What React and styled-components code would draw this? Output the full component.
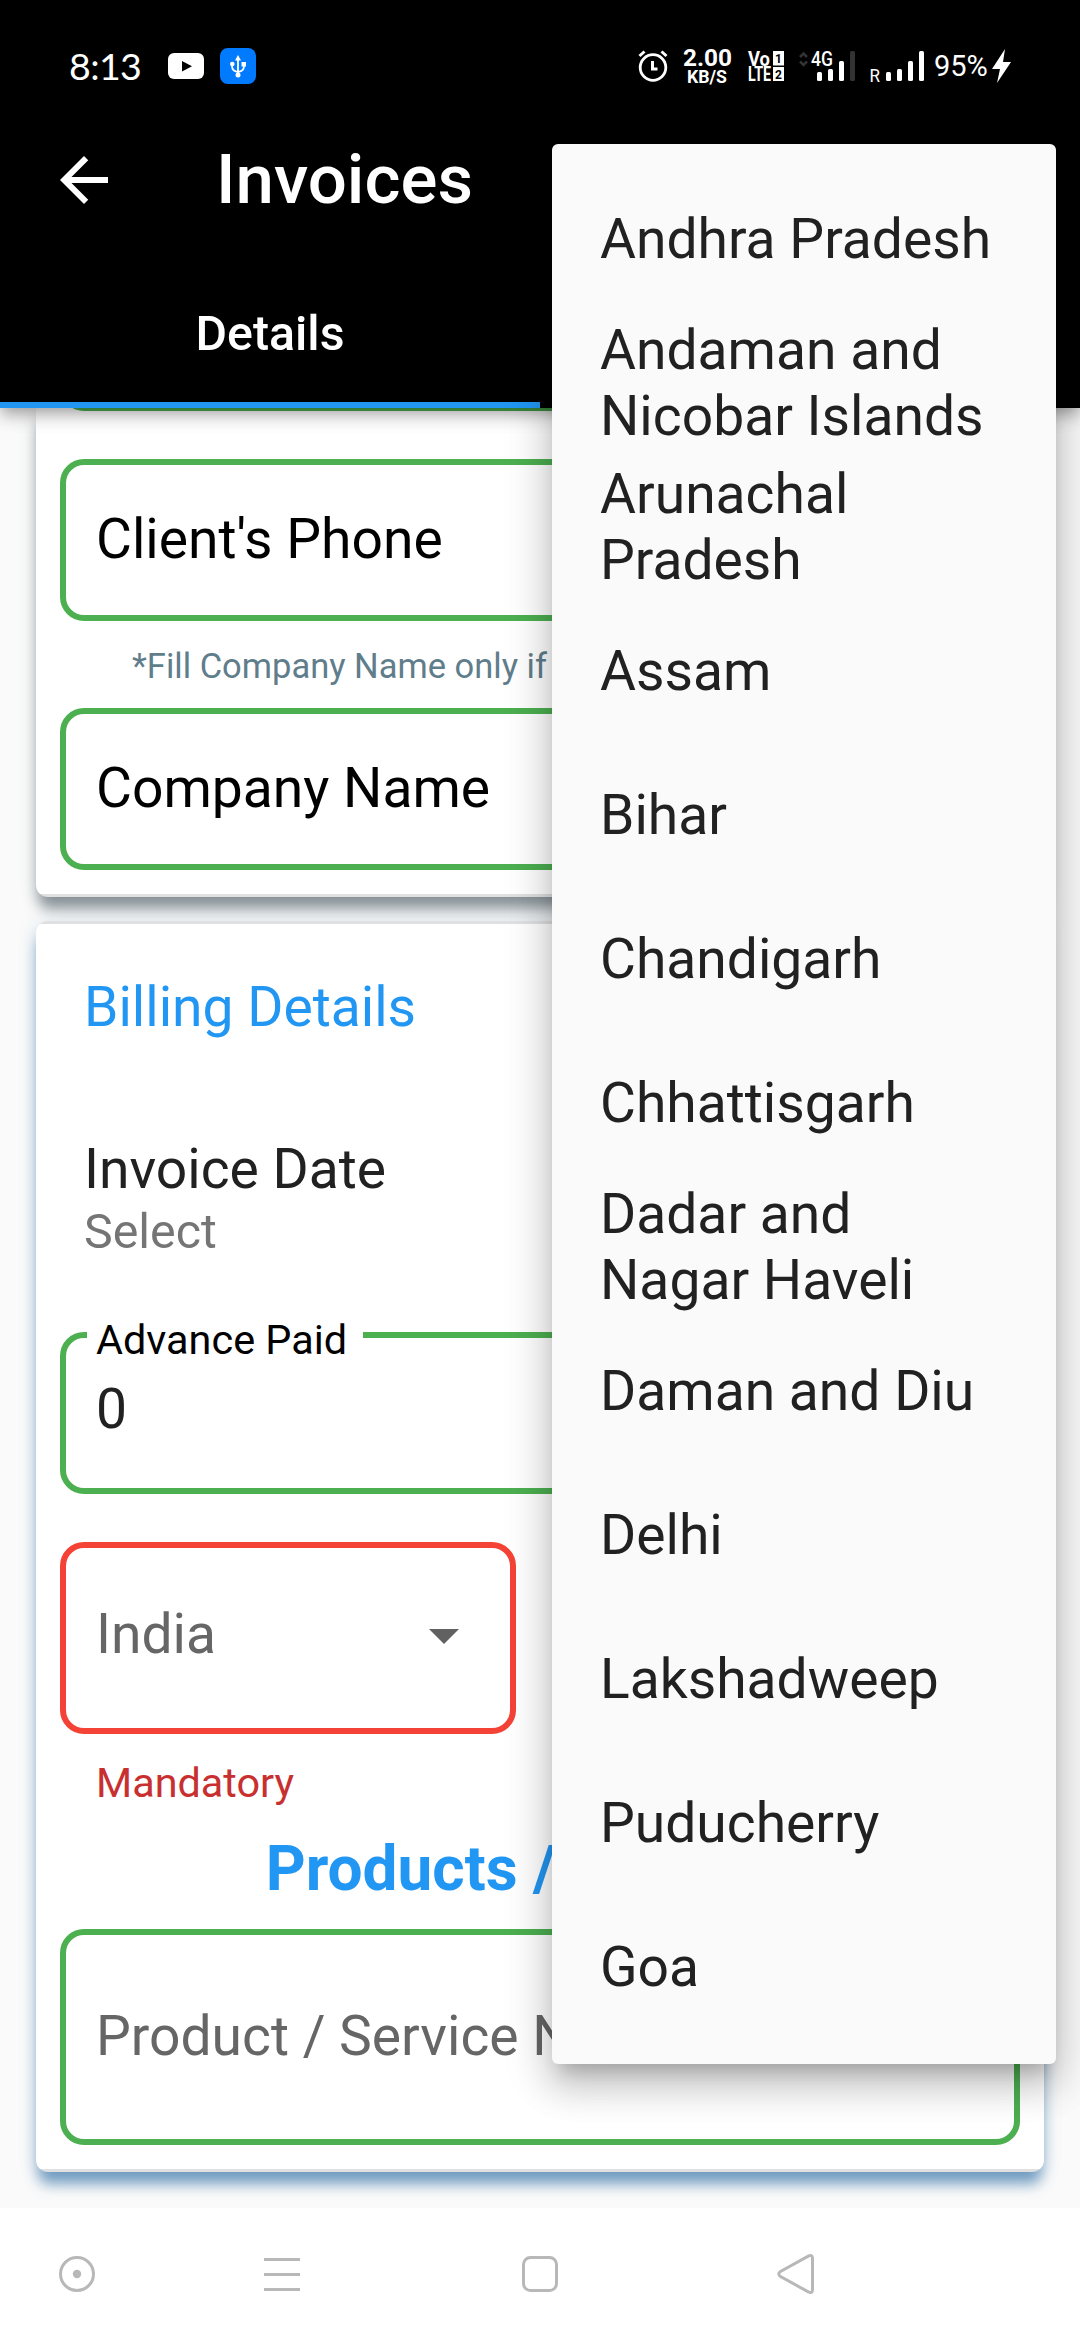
import React from 'react';
import styled, { createGlobalStyle } from 'styled-components';

const Global = createGlobalStyle`
  * { box-sizing: border-box; }
  body { margin: 0; background: #fafafa; font-family: Roboto, "Noto Sans", sans-serif; }
`;

const Screen = styled.div`
  position: relative;
  width: 1080px;
  height: 2340px;
  overflow: hidden;
  display: flex;
  flex-direction: column;
  background: #fafafa;
  color: #212121;
  font-size: 55.2px;
  line-height: 66px;
`;

const Header = styled.header`
  flex: none;
  height: 408px;
  background: #000;
  color: #fff;
  z-index: 1;
  box-shadow: 0 6px 12px -3px rgba(0, 0, 0, 0.2), 0 10px 15px rgba(0, 0, 0, 0.14), 0 3px 24px rgba(0, 0, 0, 0.1);
`;

const StatusBar = styled.div`
  height: 96px;
  padding: 36px 68px 0 69px;
  display: flex;
  justify-content: space-between;
  align-items: flex-start;
`;

const StatusGroup = styled.div`
  display: flex;
  align-items: center;
  height: 60px;
`;

const Clock = styled.span`
  width: 93px;
  font: 400 37.5px/60px Lato, sans-serif;
  letter-spacing: -0.6px;
  white-space: nowrap;
`;

const StatusIcon = styled.svg`
  display: block;
  flex: none;
  overflow: visible;
`;

const DropdownArrow = styled(StatusIcon)`
  margin-top: -2px;
`;

const Battery = styled.span`
  width: 58px;
  font: 400 29px/62px Roboto, sans-serif;
  white-space: nowrap;
`;

const Toolbar = styled.div`
  height: 168px;
  padding-left: 48px;
  display: flex;
  align-items: center;
  gap: 96px;
`;

const Title = styled.h1`
  margin: 0 0 1px;
  font-size: 69px;
  line-height: 81px;
  font-weight: 500;
`;

const Tabs = styled.div`
  height: 144px;
  display: flex;
`;

const Tab = styled.div`
  width: 540px;
  padding-top: 2px;
  border-bottom: 6px solid #2196f3;
  display: flex;
  align-items: center;
  justify-content: center;
  font-size: 48.3px;
  line-height: 58px;
  font-weight: 500;
`;

const Content = styled.main`
  height: 1800px;
  flex: none;
  overflow: hidden;
  display: flex;
  flex-direction: column;
  gap: 24px;
  padding: 0 36px;
`;

const Card = styled.section`
  flex: none;
  height: ${(p) => p.$height}px;
  padding: 0 24px;
  display: flex;
  flex-direction: column;
  background: #fff;
  border-radius: ${(p) => (p.$open ? '0 0 12px 12px' : '12px')};
  background-image: linear-gradient(#e0e0e0, #e0e0e0), linear-gradient(#e0e0e0, #e0e0e0);
  background-size: 100% 3px, 100% ${(p) => (p.$open ? 0 : 3)}px;
  background-position: bottom, top;
  background-repeat: no-repeat;
  box-shadow: 0 15px 14px -3px ${(p) => p.$shade}, 0 4px 18px ${(p) => p.$glow};
`;

const FieldEnd = styled.div`
  flex: none;
  height: 48px;
  margin-top: -45px;
  border: 6px solid #4caf50;
  border-top: 0;
  border-radius: 0 0 24px 24px;
`;

const Field = styled.div`
  position: relative;
  flex: none;
  width: ${(p) => p.$width || 960}px;
  height: ${(p) => p.$height || 162}px;
  margin-top: ${(p) => p.$top}px;
  padding: ${(p) => p.$pad}px 30px 0;
  border: 6px solid ${(p) => (p.$error ? '#f44336' : '#4caf50')};
  border-radius: 24px;
  display: flex;
  align-items: flex-start;
  justify-content: space-between;
  color: ${(p) => p.$color || '#000'};
  white-space: nowrap;
`;

const FloatingLabel = styled.span`
  position: absolute;
  left: 21px;
  top: -23px;
  width: 276px;
  padding-left: 9px;
  background: #fff;
  font-size: 41.4px;
  line-height: 50px;
  color: #000;
`;

const Note = styled.p`
  margin: 24px 0 0 72px;
  font-size: 34.5px;
  line-height: 42px;
  color: #607d8b;
`;

const SectionTitle = styled.h2`
  margin: 53px 24px 0;
  font-size: 55.2px;
  line-height: 66px;
  font-weight: 400;
  color: #2196f3;
`;

const DateRow = styled.div`
  margin: 96px 24px 0;
  display: flex;
  flex-direction: column;
`;

const DateHint = styled.span`
  font-size: 48.3px;
  line-height: 60px;
  color: #757575;
`;

const ErrorText = styled.p`
  margin: 24px 0 0 36px;
  font-size: 41.4px;
  line-height: 50px;
  color: #c83030;
`;

const ProductsTitle = styled.h2`
  margin: 24px 2px 0 0;
  text-align: center;
  font-size: 62.1px;
  line-height: 74px;
  font-weight: 700;
  color: #2196f3;
`;

const Menu = styled.ul`
  position: absolute;
  z-index: 2;
  left: 552px;
  top: 144px;
  width: 504px;
  height: 1920px;
  margin: 0;
  padding: 23px 48px;
  list-style: none;
  background: #fafafa;
  border-radius: 6px;
  box-shadow: 0 15px 17px -9px rgba(0, 0, 0, 0.2), 0 24px 35px 3px rgba(0, 0, 0, 0.14), 0 9px 49px 6px rgba(0, 0, 0, 0.12);
`;

const MenuItem = styled.li`
  height: 144px;
  display: flex;
  align-items: center;
`;

const NavBar = styled.nav`
  height: 132px;
  flex: none;
  z-index: 1;
  background: #fff;
`;

const states = [
  'Andhra Pradesh',
  'Andaman and Nicobar Islands',
  'Arunachal Pradesh',
  'Assam',
  'Bihar',
  'Chandigarh',
  'Chhattisgarh',
  'Dadar and Nagar Haveli',
  'Daman and Diu',
  'Delhi',
  'Lakshadweep',
  'Puducherry',
  'Goa',
];

function NotificationIcons() {
  return (
    <StatusIcon width="90" height="60" viewBox="162 36 90 60">
      <rect x="168" y="53" width="36" height="26" rx="6" fill="#fff" />
      <path d="M182 61v10.500l10-5.250z" fill="#000" />
      <rect x="220" y="48" width="36" height="36" rx="8" fill="#007aff" />
      <g stroke="#fff" strokeWidth="1.800" fill="none">
        <path d="M238 58v18M232 64v2q0 5 6 6q6-1 6-6v-2" />
      </g>
      <g fill="#fff">
        <path d="M238 55l3 5.500h-6z" />
        <circle cx="232.300" cy="64" r="2.300" />
        <rect x="241.500" y="62" width="4.500" height="4.500" />
        <circle cx="238" cy="75" r="2.500" />
      </g>
    </StatusIcon>
  );
}

function SystemIcons() {
  return (
    <StatusIcon width="296" height="60" viewBox="638 36 296 60">
      <g fill="none" stroke="#fff" strokeWidth="2.800">
        <circle cx="653" cy="67.500" r="12.800" />
        <path d="M652.500 61v8h5" strokeWidth="3" />
        <path d="M639.500 56l5-4.500M666.500 56l-5-4.500" strokeWidth="3" />
      </g>
      <g fill="#fff" fontFamily="Roboto, sans-serif" fontWeight="700">
        <text x="683" y="66" fontSize="23.500" textLength="49" lengthAdjust="spacingAndGlyphs">2.00</text>
        <text x="687" y="83" fontSize="18" textLength="40" lengthAdjust="spacingAndGlyphs">KB/S</text>
        <text x="748" y="65.500" fontSize="20" textLength="22" lengthAdjust="spacingAndGlyphs">Vo</text>
        <text x="748" y="81" fontSize="19.500" textLength="23" lengthAdjust="spacingAndGlyphs">LTE</text>
      </g>
      <rect x="773" y="51" width="11" height="14.500" fill="#fff" />
      <rect x="773" y="67" width="11" height="14" fill="#fff" />
      <g fill="#000" fontFamily="Roboto, sans-serif" fontWeight="700" fontSize="12" textAnchor="middle">
        <text x="778.500" y="62.500">1</text>
        <text x="778.500" y="78.500">2</text>
      </g>
      <path d="M800 57l3.500-3.500 3.500 3.500M800 61.500l3.500 3.500 3.500-3.500" fill="none" stroke="#333" strokeWidth="2.500" />
      <g fill="#fff" fontFamily="Roboto, sans-serif">
        <text x="811" y="65.500" fontSize="20" fontWeight="500" textLength="22" lengthAdjust="spacingAndGlyphs">4G</text>
        <text x="869.500" y="81.500" fontSize="17.500" textLength="10.500" lengthAdjust="spacingAndGlyphs">R</text>
        <rect x="817" y="72" width="5" height="9" rx="1.500" />
        <rect x="828" y="69" width="5" height="12" rx="1.500" />
        <rect x="839" y="61" width="5" height="20" rx="1.500" />
        <rect x="850" y="51" width="5" height="30" rx="1.500" fill="#333" />
        <rect x="886" y="72" width="5" height="9" rx="1.500" />
        <rect x="897" y="69" width="5" height="12" rx="1.500" />
        <rect x="908" y="61" width="5" height="20" rx="1.500" />
        <rect x="919" y="51" width="5" height="30" rx="1.500" />
      </g>
    </StatusIcon>
  );
}

function NavIcons() {
  return (
    <StatusIcon width="1080" height="132" viewBox="0 2208 1080 132">
      <g fill="none" stroke="#b8b8b8" strokeWidth="3">
        <circle cx="77" cy="2274" r="16.500" />
        <path d="M264 2259.500h36M264 2274.500h36M264 2289.500h36" />
        <rect x="523.500" y="2257.500" width="33" height="33" rx="7" />
        <path d="M812.500 2258.500v31q0 4-3.800 2.600L780.500 2276.500q-3.500-2.500 0-5l28.200-15.600q3.800-1.400 3.800 2.600z" />
      </g>
      <circle cx="77" cy="2274" r="4.200" fill="#b8b8b8" />
    </StatusIcon>
  );
}

export default function App() {
  return (
    <>
      <Global />
      <Screen>
        <Header>
          <StatusBar>
            <StatusGroup>
              <Clock>8:13</Clock>
              <NotificationIcons />
            </StatusGroup>
            <StatusGroup>
              <SystemIcons />
              <Battery>95%</Battery>
              <StatusIcon width="20" height="36" viewBox="0 0 20 36">
                <path d="M13 1L0 21h8L5 35 19 14h-8z" fill="#fff" />
              </StatusIcon>
            </StatusGroup>
          </StatusBar>
          <Toolbar>
            <StatusIcon width="72" height="72" viewBox="0 0 24 24">
              <path d="M20 11H7.830l5.590-5.590L12 4l-8 8 8 8 1.410-1.410L7.830 13H20v-2z" fill="#fff" />
            </StatusIcon>
            <Title>Invoices</Title>
          </Toolbar>
          <Tabs>
            <Tab>Details</Tab>
          </Tabs>
        </Header>

        <Content>
          <Card $open $height={489} $shade="rgba(75,92,100,.6)" $glow="rgba(75,92,100,.2)">
            <FieldEnd />
            <Field $top={48} $pad={41}>Client's Phone</Field>
            <Note>*Fill Company Name only if</Note>
            <Field $top={21} $pad={41}>Company Name</Field>
          </Card>

          <Card $height={1251} $shade="rgba(38,105,162,.58)" $glow="rgba(38,105,162,.22)">
            <SectionTitle>Billing Details</SectionTitle>
            <DateRow>
              <span>Invoice Date</span>
              <DateHint>Select</DateHint>
            </DateRow>
            <Field $top={70} $pad={38} $color="#212121">
              <FloatingLabel>Advance Paid</FloatingLabel>
              0
            </Field>
            <Field $top={48} $pad={53} $width={456} $height={192} $error $color="#666">
              India
              <DropdownArrow width="72" height="72" viewBox="0 0 24 24">
                <path d="M7 10l5 5 5-5z" fill="#616161" />
              </DropdownArrow>
            </Field>
            <ErrorText>Mandatory</ErrorText>
            <ProductsTitle>Products / Services</ProductsTitle>
            <Field $top={23} $pad={68} $height={216} $color="#666">Product / Service Name</Field>
          </Card>
        </Content>

        <NavBar>
          <NavIcons />
        </NavBar>

        <Menu>
          {states.map((name) => (
            <MenuItem key={name}>{name}</MenuItem>
          ))}
        </Menu>
      </Screen>
    </>
  );
}
